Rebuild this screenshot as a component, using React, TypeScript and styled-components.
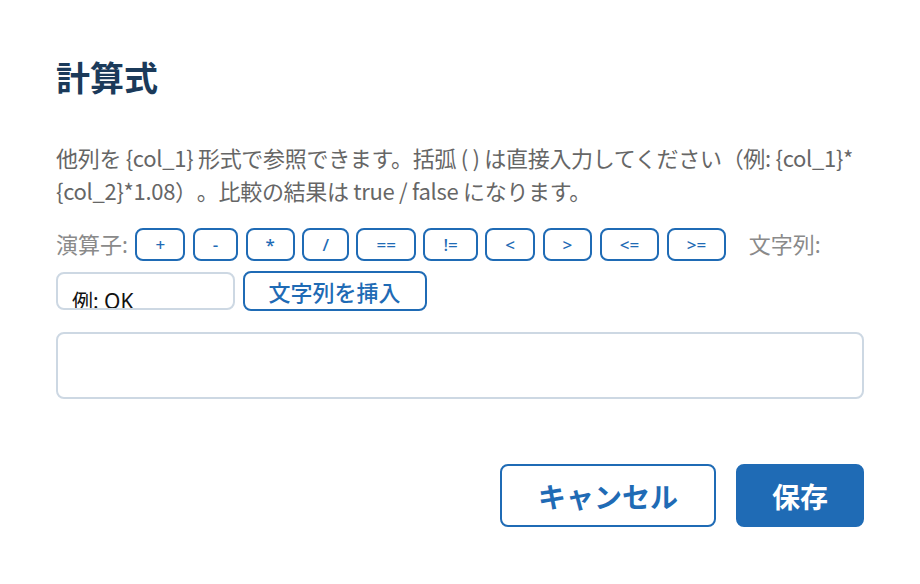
import React from 'react'
import styled, { createGlobalStyle } from 'styled-components'

const GlobalStyle = createGlobalStyle`
  body {
    margin: 0;
    background: #ffffff;
    font-family: 'Noto Sans', 'Noto Sans CJK JP', sans-serif;
    text-spacing-trim: space-all;
  }
`

const Dialog = styled.div`
  width: 808px;
  padding: 58px 56px 40px;
`

const Title = styled.h2`
  margin: 0;
  font-size: 34px;
  line-height: 40px;
  font-weight: 700;
  color: #1b3a5a;
`

const Description = styled.p`
  margin: 43px 0 0;
  font-family: 'Noto Sans CJK JP', 'Noto Sans', sans-serif;
  font-size: 22px;
  line-height: 33px;
  letter-spacing: -0.3px;
  color: #666666;
`

const Toolbar = styled.div`
  display: flex;
  flex-wrap: wrap;
  align-items: center;
  column-gap: 7.5px;
  row-gap: 10px;
  margin-top: 21px;
`

const Label = styled.span<{ $spaced?: boolean }>`
  font-size: 22px;
  line-height: 33px;
  color: #8a8a8a;
  margin-left: ${(p) => (p.$spaced ? '15px' : '0')};
`

const OpButton = styled.button`
  box-sizing: border-box;
  height: 33px;
  padding: 0 18px;
  border: 2px solid #1f6bb5;
  border-radius: 8px;
  background: #ffffff;
  color: #1f6bb5;
  font-family: inherit;
  font-size: 17px;
  font-weight: 500;
  cursor: pointer;
`

const TextInput = styled.input`
  box-sizing: border-box;
  width: 179px;
  height: 38px;
  padding: 19px 14px 0;
  border: 2px solid #cdd8e3;
  border-radius: 8px;
  font-family: inherit;
  font-size: 21px;
  line-height: 28px;
  color: #111111;
  outline: none;
  &::placeholder {
    color: #111111;
  }
`

const InsertButton = styled.button`
  box-sizing: border-box;
  height: 40px;
  padding: 0 24px;
  border: 2px solid #1f6bb5;
  border-radius: 8px;
  background: #ffffff;
  color: #1f6bb5;
  font-family: inherit;
  font-size: 22px;
  font-weight: 500;
  cursor: pointer;
`

const FormulaInput = styled.input`
  display: block;
  box-sizing: border-box;
  width: 100%;
  height: 67px;
  margin-top: 21px;
  padding: 0 16px;
  border: 2px solid #cdd8e3;
  border-radius: 8px;
  font-family: inherit;
  font-size: 22px;
  outline: none;
`

const Footer = styled.div`
  display: flex;
  justify-content: flex-end;
  gap: 20px;
  margin-top: 65px;
`

const ActionButton = styled.button<{ $primary?: boolean }>`
  box-sizing: border-box;
  height: 63px;
  padding: 0 ${(p) => (p.$primary ? '34px' : '36px')};
  border: 2px solid #1f6bb5;
  border-radius: 8px;
  background: ${(p) => (p.$primary ? '#1f6bb5' : '#ffffff')};
  color: ${(p) => (p.$primary ? '#ffffff' : '#1f6bb5')};
  font-family: inherit;
  font-size: 28px;
  font-weight: 700;
  cursor: pointer;
`

const operators = ['+', '-', '*', '/', '==', '!=', '<', '>', '<=', '>=']

export default function App() {
  return (
    <>
      <GlobalStyle />
      <Dialog>
        <Title>計算式</Title>
        <Description>
          他列を {'{col_1}'} 形式で参照できます。括弧 ( ) は直接入力してください（例: {'{col_1}'}*
          {'{col_2}'}*1.08）。比較の結果は true / false になります。
        </Description>
        <Toolbar>
          <Label>演算子:</Label>
          {operators.map((op) => (
            <OpButton key={op}>{op}</OpButton>
          ))}
          <Label $spaced>文字列:</Label>
          <TextInput placeholder="例: OK" />
          <InsertButton>文字列を挿入</InsertButton>
        </Toolbar>
        <FormulaInput />
        <Footer>
          <ActionButton>キャンセル</ActionButton>
          <ActionButton $primary>保存</ActionButton>
        </Footer>
      </Dialog>
    </>
  )
}
